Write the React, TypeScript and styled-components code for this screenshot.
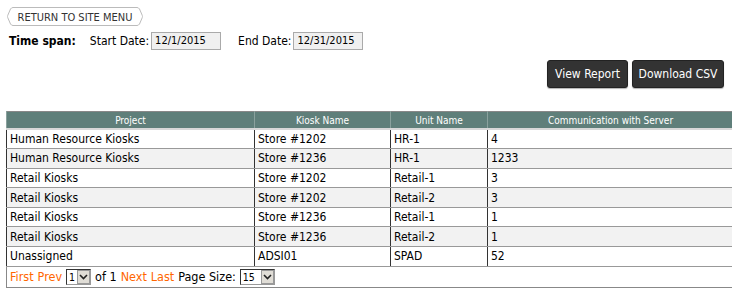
import React from "react";
import styled, { createGlobalStyle } from "styled-components";

const Global = createGlobalStyle`
  html, body { margin: 0; padding: 0; background: #fff; }
  body { font-family: "DejaVu Sans Condensed", "DejaVu Sans", "Liberation Sans", sans-serif; color: #000; }
`;

const Page = styled.div`
  width: 732px;
  padding: 7px 3px 0 6px;
  box-sizing: border-box;
`;

const ReturnWrap = styled.div`
  position: relative;
  width: 136px;
  height: 19px;
  margin-left: 1px;
  display: flex;
  align-items: center;
  justify-content: center;
  font-size: 11px;
  color: #333;
`;

const ReturnShape = styled.svg`
  position: absolute;
  inset: 0;
`;

const ReturnLabel = styled.span`
  position: relative;
  padding-top: 1px;
`;

const SpanRow = styled.div`
  display: flex;
  align-items: center;
  height: 18px;
  margin-top: 6px;
  font-size: 12px;
  white-space: nowrap;
`;

const SpanTitle = styled.span`
  font-weight: bold;
  margin-left: 3px;
  margin-right: 14px;
  flex-shrink: 0;
`;

const FieldLabel = styled.span`
  margin-right: 2px;
  flex-shrink: 0;
`;

const DateInput = styled.div<{ $gap: number }>`
  width: 65px;
  height: 16px;
  border: 1px solid #aaa;
  background: #f0f0f0;
  font-size: 11px;
  line-height: 16px;
  padding-left: 3px;
  flex-shrink: 0;
  box-sizing: content-box;
  margin-right: ${(p) => p.$gap}px;
`;

const Actions = styled.div`
  display: flex;
  justify-content: flex-end;
  gap: 4px;
  margin-top: 10px;
  padding-right: 5px;
`;

const DarkButton = styled.div<{ $w: number }>`
  width: ${(p) => p.$w}px;
  height: 28px;
  background: #333;
  border: 1px solid #222;
  border-radius: 3px;
  color: #fff;
  font-size: 12px;
  display: flex;
  align-items: center;
  justify-content: center;
  box-sizing: border-box;
  box-shadow: 0 1px 1px rgba(0,0,0,0.3);
`;

const Table = styled.table`
  margin-top: 23px;
  width: 723px;
  border-collapse: collapse;
  border: 1px solid #888;
  table-layout: fixed;
`;

const Th = styled.th<{ $w: number }>`
  width: ${(p) => p.$w}px;
  background: #5f7f7a;
  color: #fff;
  font-weight: normal;
  font-size: 10px;
  height: 16px;
  padding: 0;
  border-left: 1px solid #8aa19d;
  border-bottom: 2px solid #d8d8d8;
`;

const Tr = styled.tr<{ $alt: boolean }>`
  height: 19.6px;
  background: ${(p) => (p.$alt ? "#f2f2f2" : "#fff")};
`;

const Td = styled.td`
  padding: 0 0 0 3px;
  font-size: 12px;
  border-left: 1px solid #333;
  border-bottom: 1px solid #999;
  white-space: nowrap;
  overflow: hidden;
`;

const PagerCell = styled.td`
  height: 20px;
  padding: 0 0 0 3px;
  font-size: 12.5px;
  border-top: 1px solid #555;
`;

const Pager = styled.div`
  display: flex;
  align-items: center;
  gap: 4px;
`;

const PageLink = styled.span`
  color: #f60;
`;

const Select = styled.div<{ $w: number }>`
  width: ${(p) => p.$w}px;
  height: 14px;
  border: 1px solid #333;
  border-right-color: #999;
  border-bottom-color: #999;
  background: #fff;
  display: flex;
  align-items: stretch;
  font-size: 10.5px;
  box-sizing: content-box;
`;

const SelectValue = styled.span`
  flex: 1;
  line-height: 14px;
  padding-left: 2px;
`;

const SelectArrow = styled.span`
  width: 13px;
  background: #e0ddd6;
  border: 1px solid #999;
  box-sizing: border-box;
  display: flex;
  align-items: center;
  justify-content: center;
`;

const rows = [
  ["Human Resource Kiosks", "Store #1202", "HR-1", "4"],
  ["Human Resource Kiosks", "Store #1236", "HR-1", "1233"],
  ["Retail Kiosks", "Store #1202", "Retail-1", "3"],
  ["Retail Kiosks", "Store #1202", "Retail-2", "3"],
  ["Retail Kiosks", "Store #1236", "Retail-1", "1"],
  ["Retail Kiosks", "Store #1236", "Retail-2", "1"],
  ["Unassigned", "ADSI01", "SPAD", "52"],
];

const Arrow = () => (
  <svg width="9" height="6" viewBox="0 0 9 6">
    <path d="M1 1 L4.5 4.5 L8 1" fill="none" stroke="#222" strokeWidth="1.6" />
  </svg>
);

export default function App() {
  return (
    <Page>
      <Global />
      <ReturnWrap>
        <ReturnShape width="136" height="19" viewBox="0 0 136 19">
          <path
            d="M6 0.5 H130 Q131.5 0.5 132.5 2 L135.3 8.5 Q135.8 9.5 135.3 10.5 L132.5 17 Q131.5 18.5 130 18.5 H6 Q4.5 18.5 3.5 17 L0.7 10.5 Q0.2 9.5 0.7 8.5 L3.5 2 Q4.5 0.5 6 0.5 Z"
            fill="#fff"
            stroke="#bbb"
          />
        </ReturnShape>
        <ReturnLabel>RETURN TO SITE MENU</ReturnLabel>
      </ReturnWrap>
      <SpanRow>
        <SpanTitle>Time span:</SpanTitle>
        <FieldLabel>Start Date:</FieldLabel>
        <DateInput $gap={17}>12/1/2015</DateInput>
        <FieldLabel>End Date:</FieldLabel>
        <DateInput $gap={0}>12/31/2015</DateInput>
      </SpanRow>
      <Actions>
        <DarkButton $w={81}>View Report</DarkButton>
        <DarkButton $w={92}>Download CSV</DarkButton>
      </Actions>
      <Table>
        <thead>
          <tr>
            <Th $w={247}>Project</Th>
            <Th $w={135}>Kiosk Name</Th>
            <Th $w={96}>Unit Name</Th>
            <Th $w={245}>Communication with Server</Th>
          </tr>
        </thead>
        <tbody>
          {rows.map((r, i) => (
            <Tr key={i} $alt={i % 2 === 1}>
              {r.map((c, j) => (
                <Td key={j}>{c}</Td>
              ))}
            </Tr>
          ))}
          <tr>
            <PagerCell colSpan={4}>
              <Pager>
                <PageLink>First</PageLink>
                <PageLink>Prev</PageLink>
                <Select $w={23}>
                  <SelectValue>1</SelectValue>
                  <SelectArrow><Arrow /></SelectArrow>
                </Select>
                <span>of 1</span>
                <PageLink>Next</PageLink>
                <PageLink>Last</PageLink>
                <span>Page Size:</span>
                <Select $w={33}>
                  <SelectValue>15</SelectValue>
                  <SelectArrow><Arrow /></SelectArrow>
                </Select>
              </Pager>
            </PagerCell>
          </tr>
        </tbody>
      </Table>
    </Page>
  );
}
